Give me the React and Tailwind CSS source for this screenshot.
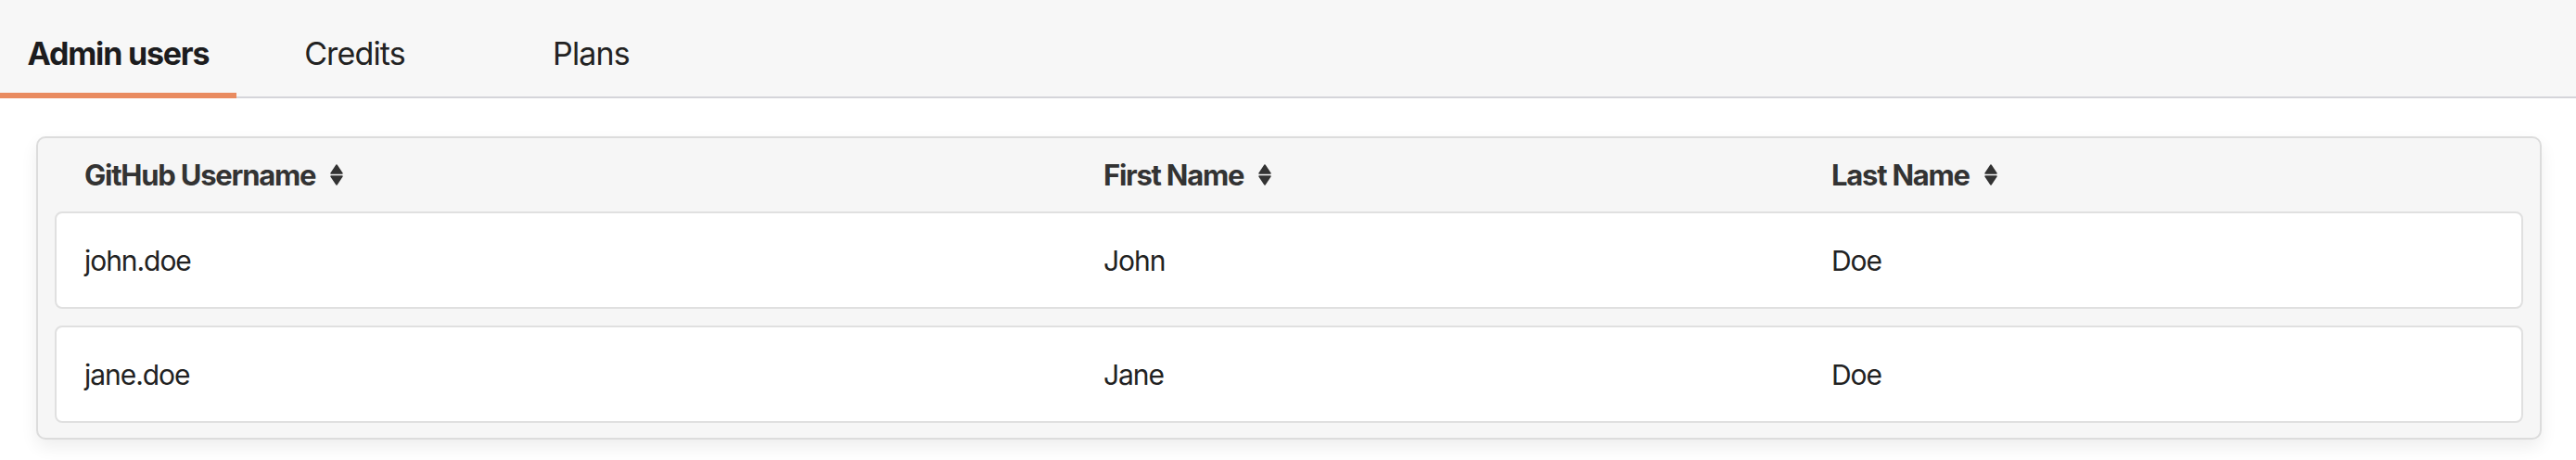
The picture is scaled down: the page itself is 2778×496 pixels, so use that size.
import React from 'react';

const tabs = ['Admin users', 'Credits', 'Plans'];

const users = [
  { login: 'john.doe', first: 'John', last: 'Doe' },
  { login: 'jane.doe', first: 'Jane', last: 'Doe' },
];

const SortIcon = () => (
  <svg width="14" height="23" viewBox="0 0 14 23" className="shrink-0 text-[#333]">
    <path
      d="M7 1 L13 10 H1 Z M1 13 H13 L7 22 Z"
      fill="currentColor"
      stroke="currentColor"
      strokeWidth="1.5"
      strokeLinejoin="round"
    />
  </svg>
);

const HeaderCell = ({ label, className }) => (
  <div className={`flex items-center gap-[16px] ${className}`}>
    <span>{label}</span>
    <SortIcon />
  </div>
);

const App = () => {
  return (
    <div className="w-full min-h-[496px] bg-white font-['Inter',sans-serif]">
      <div className="flex h-[106px] bg-[#f7f7f7] border-b-2 border-[#d5d5da]">
        {tabs.map((tab, i) => (
          <div
            key={tab}
            className={`relative flex w-[255px] h-full items-center justify-center pt-[11px] text-[34px] leading-none ${
              i === 0
                ? 'font-bold text-[#1c1c1e] tracking-[-0.035em]'
                : 'font-normal text-[#222] tracking-[-0.025em]'
            }`}
          >
            {tab}
            {i === 0 && (
              <span className="absolute left-0 right-0 -bottom-[2px] h-[6px] bg-[#e98b60]" />
            )}
          </div>
        ))}
      </div>

      <div className="mt-[41px] ml-[39px] mr-[37px] rounded-[10px] border-2 border-[#dcdcdc] bg-[#f6f6f6] px-[18px] pb-[16px] shadow-[0_8px_18px_rgba(0,0,0,0.07)]">
        <div className="flex h-[79px] items-center pl-[32px] text-[31px] font-bold text-[#333] leading-none tracking-[-0.04em]">
          <HeaderCell label="GitHub Username" className="w-[1099px]" />
          <HeaderCell label="First Name" className="w-[785px]" />
          <HeaderCell label="Last Name" className="flex-1" />
        </div>
        <div className="flex flex-col gap-[18px]">
          {users.map((u) => (
            <div
              key={u.login}
              className="flex h-[105px] items-center rounded-[8px] border-2 border-[#e0e0e0] bg-white pl-[30px] text-[30px] text-[#222] leading-none tracking-[-0.035em]"
            >
              <div className="w-[1099px]">{u.login}</div>
              <div className="w-[785px]">{u.first}</div>
              <div className="flex-1">{u.last}</div>
            </div>
          ))}
        </div>
      </div>
    </div>
  );
};

export default App;
